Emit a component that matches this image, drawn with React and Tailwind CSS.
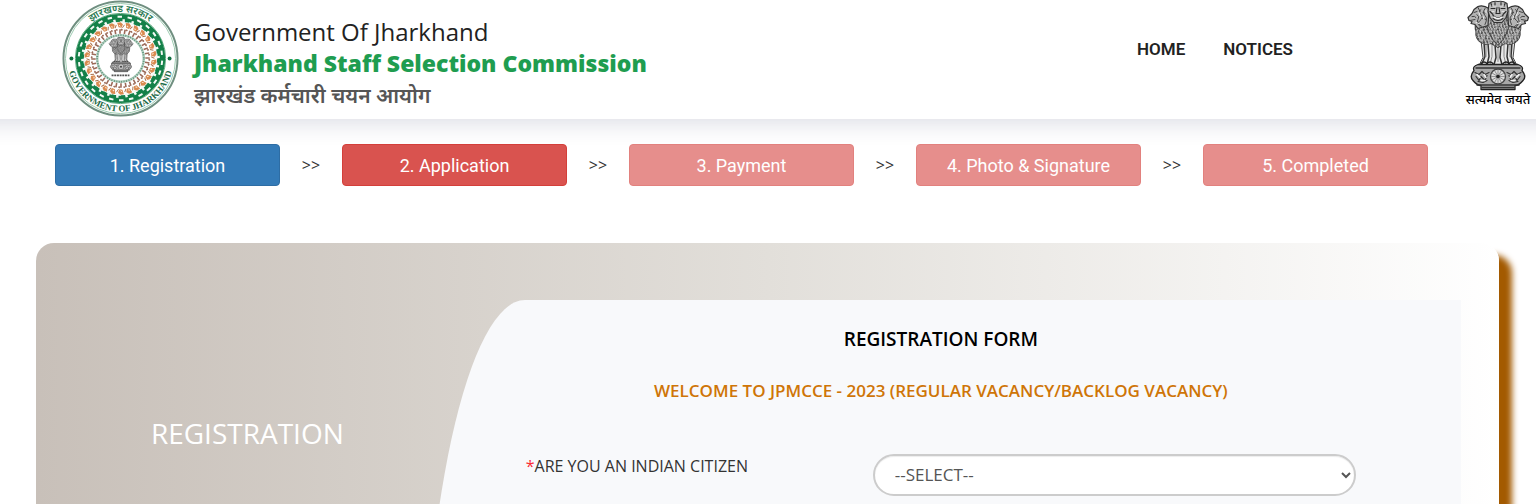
import React, { useState } from 'react';

const steps = [
  { label: '1. Registration', style: 'bg-[#337ab7] border-[#2e6da4]' },
  { label: '2. Application', style: 'bg-[#d9534f] border-[#d43f3a]' },
  { label: '3. Payment', style: 'bg-[#d9534f] border-[#d43f3a]', disabled: true },
  { label: '4. Photo & Signature', style: 'bg-[#d9534f] border-[#d43f3a]', disabled: true },
  { label: '5. Completed', style: 'bg-[#d9534f] border-[#d43f3a]', disabled: true },
];

const range = (n) => Array.from({ length: n }, (_, i) => i);

// small wavy locks that fill the manes
const curls = [];
for (let row = 0; row < 9; row++) {
  for (let col = 0; col < 15; col++) {
    const x = 9 + col * 3.5 + (row % 2) * 1.7 + ((col * 7 + row * 3) % 4) * 0.4;
    const y = 17 + row * 3 + ((col * 5 + row) % 3) * 0.5;
    curls.push(`M${x} ${y}q${1.6} ${-1.4 + (col % 3)} ${1.2} ${1.4}t${-0.6} ${1.8}`);
  }
}
const curlPath = curls.join('');
const manePath = 'M13 18Q10 25 12 31Q11 38 17 42L22 44 27 43 34 47 41 43 46 44 51 42Q57 38 56 31Q58 25 55 18L43 14H25Z';

function Lions() {
  return (
    <g strokeLinejoin="round" strokeLinecap="round">
      {/* legs */}
      <path d="M17 40L19 57 15 65H53L49 57 51 40Z" fill="#e8e8e8" stroke="#444" strokeWidth="1" />
      <path
        d="M20 42l1 14-3 7M24 43l1 13-2 8M31 44l1 13-2 7M37 44l-1 13 2 7M44 43l-1 13 2 8M48 42l-1 14 3 7"
        fill="none" stroke="#333" strokeWidth="1.5"
      />
      <path d="M22 44v12M28 44v12l-2 8M34 45v16M40 44v12l2 8M46 44v12" fill="none" stroke="#888" strokeWidth="1" />
      <path d="M17 63q3-3 6 0q3-3 6 0M39 63q3-3 6 0q3-3 6 0" fill="none" stroke="#222" strokeWidth="1.4" />

      {/* manes */}
      <path d={manePath} fill="#9a9a9a" stroke="#444" strokeWidth="1.2" />
      <clipPath id="mane">
        <path d={manePath} />
      </clipPath>
      <g clipPath="url(#mane)">
        <path d={curlPath} fill="none" stroke="#3a3a3a" strokeWidth="0.9" />
        <path d={curlPath} transform="translate(1.8 1.2)" fill="none" stroke="#d8d8d8" strokeWidth="0.7" />
        <path d="M22 18q0 15 12 27q12-12 12-27" fill="none" stroke="#444" strokeWidth="1" />
      </g>

      {/* side heads */}
      {[0, 1].map((i) => (
        <g key={i} transform={i ? 'translate(68.5 0) scale(-1 1)' : undefined}>
          <path
            d="M25 8Q19 4 14 6L10 9 8 13 4 17 5 20 8 21 7 23 11 24 14 28 24 25Z"
            fill="#b5b5b5" stroke="#333" strokeWidth="1.2"
          />
          <path
            d="M10 12l3-1M8 16q3-1 4 1M6 20l5-1M13 14q3 2 1 5t2 7M17 9q-3 2 0 5t-1 6 2 6M21 8q-3 4 0 7t0 9M14 7l2 4M19 12l3 1M18 18l4 1"
            fill="none" stroke="#444" strokeWidth="1"
          />
          <path d="M15 12l1 3M19 16l1 3M12 22l3 1M22 10v3" stroke="#eee" strokeWidth="1" />
        </g>
      ))}

      {/* centre head */}
      <path
        d="M25 3Q29 0 34 1Q39 0 43 3L44 11 42 17 38 22H30L26 17 24 11Z"
        fill="#b9b9b9" stroke="#333" strokeWidth="1.2"
      />
      <path
        d="M27 3l1 3M31 2v3M37 2v3M41 3l-1 3M27 8l4 0M37 8l4 0M33 7l-1 6h4l-1-6M26 11l3 3M42 11l-3 3M29 15q5 5 10 0M29 18q5 4 10 0"
        fill="none" stroke="#2a2a2a" strokeWidth="1.1"
      />
      <path d="M30 16.500q4 3 8 0" fill="none" stroke="#fff" strokeWidth="1.2" />
      <path d="M28 5.500h4M36 5.500h4M28 11h2M38 11h2" stroke="#e5e5e5" strokeWidth="0.9" />

      {/* abacus with the wheel */}
      <path
        d="M14 64H54Q60 66 58 70Q63 76 59 80Q55 85 51 85V89H17V85Q13 85 9 80Q5 76 10 70Q8 66 14 64Z"
        fill="#a8a8a8" stroke="#222" strokeWidth="1.3"
      />
      <path d="M12 67.500H56M13 84.500H55M18 87H50" fill="none" stroke="#333" strokeWidth="1.4" />
      <path
        d="M11 72l4 2 3-3 3 3 4-2M12 76l3 4 2-4 4 4 2-5M14 81l5 1 4-2M57 72l-4 2-3-3-3 3-4-2M56 76l-3 4-2-4-4 4-2-5M54 81l-5 1-4-2"
        fill="none" stroke="#333" strokeWidth="1.2"
      />
      <path d="M13 74l3 3M20 74l2 3M17 80l4 0M55 74l-3 3M48 74l-2 3M51 80l-4 0" stroke="#f2f2f2" strokeWidth="1.5" />
      <circle cx="34" cy="76" r="7.500" fill="#ddd" stroke="#444" strokeWidth="1.3" />
      {range(12).map((i) => (
        <path key={i} d="M34 76V69.500" stroke="#666" strokeWidth="0.6" transform={`rotate(${i * 30} 34 76)`} />
      ))}
      <circle cx="34" cy="76" r="1.800" fill="#222" />
    </g>
  );
}

function Seal() {
  return (
    <svg viewBox="0 0 118 118" className="size-[117px] shrink-0" role="img" aria-label="Jharkhand seal">
      <circle cx="59" cy="59" r="57.500" fill="#fff" stroke="#6f8f80" strokeWidth="2" />
      <circle cx="59" cy="59" r="55.500" fill="none" stroke="#9ccbb0" strokeWidth="1" />
      <circle cx="59" cy="59" r="45.500" fill="none" stroke="#5aa87c" strokeWidth="1" />
      <circle cx="59" cy="59" r="41" fill="none" stroke="#138048" strokeWidth="8" />
      {range(26).map((i) => (
        <g key={i} transform={`rotate(${(i * 360) / 26} 59 59)`}>
          <path d="M56 16h4.500v2h-4.500zM61 19.500h2.400v4h-4.800v-2h2.400z" fill="#f4faf6" />
        </g>
      ))}
      {range(26).map((i) => (
        <g key={i} transform={`rotate(${(i * 360) / 26} 59 59)`}>
          <path d="M55.500 23l3.500-.5 2.500 2-1.500 3.500-3-.5-.5-2z" fill="#d98a50" />
          <path d="M61 28l2-3" stroke="#a9704a" strokeWidth="1" />
          <path d="M57.500 25.500l1.500 1" stroke="#fff0e0" strokeWidth="1" />
        </g>
      ))}
      {range(36).map((i) => (
        <path
          key={i}
          d="M58.500 29.500v4.500M59.500 29.500l1.500 1"
          fill="none" stroke="#9c6a58" strokeWidth="1.6"
          transform={`rotate(${i * 10} 59 59)`}
        />
      ))}
      <circle cx="59" cy="59" r="23.500" fill="#fff" stroke="#b5d0c2" strokeWidth="2.500" />
      <circle cx="59" cy="59" r="23.500" fill="none" stroke="#5d957a" strokeWidth="1.800" strokeDasharray="1 1.5" />
      <svg x="46" y="37" width="27" height="36" viewBox="0 0 68 90">
        <Lions />
      </svg>
      <path d="M50 76h18" stroke="#555" strokeWidth="1.800" strokeDasharray="2 .7" />
      <circle cx="9.500" cy="59" r="2" fill="#0f7040" />
      <circle cx="108.500" cy="59" r="2" fill="#0f7040" />
      <path id="sealTop" d="M12 59a47 47 0 0 1 94 0" fill="none" />
      <path id="sealBottom" d="M5.500 59a53.500 53.500 0 0 0 107 0" fill="none" />
      <text className="font-['Noto_Sans',sans-serif] font-semibold" fontSize="10" fill="#2b7a52" textAnchor="middle">
        <textPath href="#sealTop" startOffset="50%">झारखण्ड सरकार</textPath>
      </text>
      <text className="font-['Liberation_Serif',serif] font-bold" fontSize="9" fill="#1c6a46" textAnchor="middle">
        <textPath href="#sealBottom" startOffset="50%">GOVERNMENT OF JHARKHAND</textPath>
      </text>
    </svg>
  );
}

function Header() {
  return (
    <header className="-mx-8 flex h-[119px] items-start justify-between bg-white pl-[94px] pr-9 shadow-[0_4px_22px_rgba(30,40,90,0.16)]">
      <a href="#home" className="flex gap-[15px]">
        <Seal />
        <div className="pt-4 font-['Open_Sans','Noto_Sans',sans-serif]">
          <p className="text-2xl leading-8 text-[#222]">Government Of Jharkhand</p>
          <p className="text-[23px] font-extrabold leading-[30px] text-[#1f9d50]">Jharkhand Staff Selection Commission</p>
          <p className="text-[21px] font-semibold leading-[34px] text-[#555]">झारखंड कर्मचारी चयन आयोग</p>
        </div>
      </a>

      <div className="flex">
        <nav className="mr-[171px] flex gap-[38px] pt-[37px] font-['Roboto',sans-serif] text-[17px] font-semibold leading-6 text-[#222]">
          <a href="#home">HOME</a>
          <a href="#notices">NOTICES</a>
        </nav>
        <div className="flex w-[68px] flex-col items-center">
          <svg viewBox="0 0 68 90" className="h-[91px] w-[68px]" role="img" aria-label="National emblem">
            <Lions />
          </svg>
          <p className="whitespace-nowrap font-['Noto_Sans',sans-serif] text-[13px] font-medium leading-4 text-black">सत्यमेव जयते</p>
        </div>
      </div>
    </header>
  );
}

function Steps() {
  return (
    <div className="flex items-center px-[55px] pt-[25px]">
      {steps.map((step, i) => (
        <React.Fragment key={step.label}>
          {i > 0 && (
            <span className="w-[62px] text-center font-['Open_Sans',sans-serif] text-base leading-6 text-[#333]">&gt;&gt;</span>
          )}
          <button
            type="button"
            disabled={step.disabled}
            className={`h-[42px] w-[225px] rounded border pt-0.5 font-['Roboto',sans-serif] text-lg text-white disabled:opacity-65 ${step.style}`}
          >
            {step.label}
          </button>
        </React.Fragment>
      ))}
    </div>
  );
}

function App() {
  const [citizen, setCitizen] = useState('');

  return (
    <div className="min-h-screen overflow-hidden bg-white">
      <Header />
      <Steps />

      <main className="ml-9 mr-[37px] mt-[57px] flex rounded-[18px] bg-linear-to-r from-[#c8c0b9] via-[#e2dfda] to-white px-[38px] pt-[57px] pb-10 font-['Trebuchet_MS','Open_Sans',sans-serif] shadow-[13px_12px_6px_#a35a00]">
        <aside className="w-1/4 pt-[113px] text-center">
          <h3 className="text-[28px] font-medium leading-10 text-white">REGISTRATION</h3>
        </aside>

        <section className="min-h-[950px] w-3/4 rounded-tl-[10%_50%] bg-[#f8f9fb]">
          <h1 className="pt-[27px] text-center text-[19px] font-semibold leading-6 text-black">REGISTRATION FORM</h1>
          <h2 className="pt-7 text-center text-[17px] font-semibold leading-6 text-[#cf7507]">
            WELCOME TO JPMCCE - 2023 (REGULAR VACANCY/BACKLOG VACANCY)
          </h2>
          <form className="flex items-start px-[105px] pt-[51px]">
            <label htmlFor="citizen" className="w-[347px] shrink-0 text-base leading-6 text-[#333]">
              <span className="text-red-500">*</span>ARE YOU AN INDIAN CITIZEN
            </label>
            <select
              id="citizen"
              value={citizen}
              onChange={(e) => setCitizen(e.target.value)}
              className="h-[42px] flex-1 rounded-3xl border-2 border-[#ccc] bg-white pb-0.5 pl-4 pr-1 text-[17px] text-[#555] shadow-[inset_0_1px_1px_rgba(0,0,0,0.075)]"
            >
              <option value="">--SELECT--</option>
              <option value="YES">YES</option>
              <option value="NO">NO</option>
            </select>
          </form>
        </section>
      </main>
    </div>
  );
}

export default App;
